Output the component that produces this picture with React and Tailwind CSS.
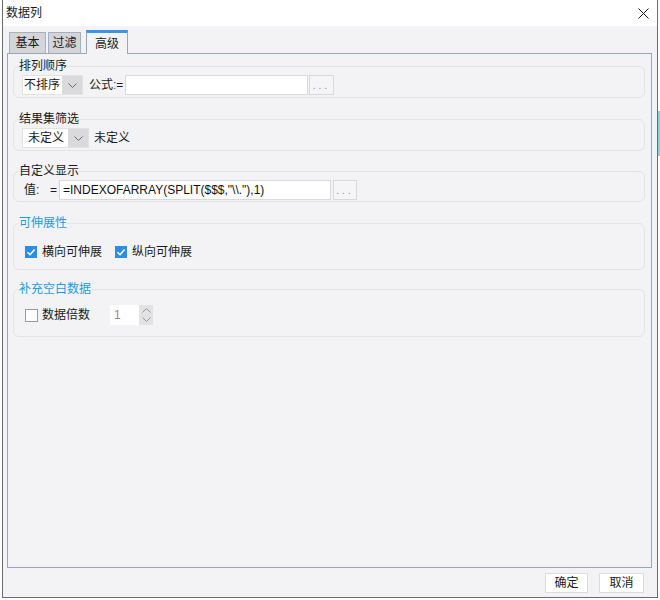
import React from 'react';

const font = "font-['Liberation_Sans','Noto_Sans_CJK_SC',sans-serif]";

const Group = ({ title, blue, className = '', children }) => (
  <fieldset className={`border border-[#e3e3e6] rounded-[6px] px-[5px] ${className}`}>
    <legend className={`p-0 text-[12px] leading-[16px] ${blue ? 'text-[#1c9be0]' : 'text-[#1a1a1a]'}`}>{title}</legend>
    <div className="pl-[3px]">{children}</div>
  </fieldset>
);

const Chevron = () => (
  <svg width="9" height="5" viewBox="0 0 9 5" fill="none">
    <path d="M0.5 0.5 L4.5 4.5 L8.5 0.5" stroke="#6b6b6b" strokeWidth="1" />
  </svg>
);

const Dots = ({ w }) => (
  <div className={`${w} h-[20px] border border-[#d9d9d9] bg-[#f5f5f7] flex items-end justify-center pb-[3px] text-[10px] leading-[10px] tracking-[3px] text-[#8a8a8a]`}>
    ...
  </div>
);

const Check = ({ checked }) =>
  checked ? (
    <span className="w-[12px] h-[12px] bg-[#2e8be6] flex items-center justify-center">
      <svg width="10" height="10" viewBox="0 0 10 10" fill="none">
        <path d="M1.5 5.2 L4 7.7 L8.6 2.4" stroke="#ffffff" strokeWidth="1.6" />
      </svg>
    </span>
  ) : (
    <span className="w-[13px] h-[13px] border border-[#9a9a9a] bg-white" />
  );

export default function App() {
  return (
    <div className={`w-[660px] h-[600px] bg-white flex overflow-hidden ${font} text-[12px] text-[#1a1a1a]`}>
      <div className="w-[2px] shrink-0" />

      {/* Dialog */}
      <div className="w-[656px] h-[598px] shrink-0 flex flex-col border-x border-b border-[#6b6b6b] bg-[#f3f3f5]">
        {/* Title bar */}
        <div className="h-[26px] shrink-0 bg-white flex items-center justify-between pl-[3px] pr-[8px]">
          <span className="text-[12px] leading-[16px]">数据列</span>
          <svg width="11" height="11" viewBox="0 0 11 11" fill="none">
            <path d="M0.5 0.5 L10.5 10.5 M10.5 0.5 L0.5 10.5" stroke="#1a1a1a" strokeWidth="1" />
          </svg>
        </div>

        <div className="flex-1 flex flex-col pt-[4px] pl-[4px] pr-[5px] pb-[4px]">
          {/* Tabs */}
          <div className="h-[23px] flex items-end pl-[2px]">
            <div className="w-[37px] h-[21px] border border-b-0 border-[#a3afc2] bg-[#d5d5d8] flex items-center justify-center">基本</div>
            <div className="w-[33px] h-[21px] ml-[2px] border border-b-0 border-[#a3afc2] bg-[#d5d5d8] flex items-center justify-center">过滤</div>
            <div className="w-[42px] h-[24px] ml-[5px] -mb-px relative z-10 border-x border-[#97a7c1] border-t-[3px] border-t-[#3d94e6] bg-[#f3f3f5] flex items-center justify-center">高级</div>
          </div>

          {/* Panel */}
          <div className="flex-1 border border-[#97a7c1] pt-[4px] pl-[5px] pr-[6px]">
            <Group title="排列顺序" className="pb-[2px]">
              <div className="flex items-center h-[20px] mt-[1px]">
                <div className="flex h-[20px] border border-[#e2e2e2]">
                  <div className="w-[39px] bg-white flex items-center pl-[1px]">不排序</div>
                  <div className="w-[20px] bg-[#dadadc] flex items-center justify-center"><Chevron /></div>
                </div>
                <span className="w-[36px] ml-[6px]">公式<span className="text-[#7a3a8a]">:</span>=</span>
                <div className="w-[183px] h-[20px] bg-white border border-[#d9d9d9]" />
                <div className="ml-[1px]"><Dots w="w-[25px]" /></div>
              </div>
            </Group>

            <Group title="结果集筛选" className="mt-[13px] pb-[2px]">
              <div className="flex items-center h-[20px] mt-[1px]">
                <div className="flex h-[20px] border border-[#e2e2e2]">
                  <div className="w-[45px] bg-white flex items-center pl-[5px]">未定义</div>
                  <div className="w-[20px] bg-[#dadadc] flex items-center justify-center"><Chevron /></div>
                </div>
                <span className="ml-[5px]">未定义</span>
              </div>
            </Group>

            <Group title="自定义显示" className="mt-[12px] pb-[1px]">
              <div className="flex items-center h-[20px] mt-[1px]">
                <span className="ml-[2px] w-[26px]">值:</span>
                <span className="w-[9px]">=</span>
                <div className="w-[272px] h-[20px] bg-white border border-[#d9d9d9] flex items-center pl-[3px] text-[12px] text-[#111]">
                  =INDEXOFARRAY(SPLIT($$$,"\\."),1)
                </div>
                <div className="ml-[2px]"><Dots w="w-[24px]" /></div>
              </div>
            </Group>

            <Group title="可伸展性" blue className="mt-[13px] pb-[7px]">
              <div className="flex items-center h-[20px] mt-[11px] pl-[3px]">
                <Check checked />
                <span className="ml-[5px]">横向可伸展</span>
                <span className="ml-[13px]"><Check checked /></span>
                <span className="ml-[5px]">纵向可伸展</span>
              </div>
            </Group>

            <Group title="补充空白数据" blue className="mt-[11px] pb-[11px]">
              <div className="flex items-center h-[20px] mt-[8px] pl-[3px]">
                <Check />
                <span className="ml-[4px]">数据倍数</span>
                <div className="ml-[20px] flex h-[20px]">
                  <div className="w-[29px] bg-white flex items-center pl-[4px] text-[#8a8a8a]">1</div>
                  <div className="w-[14px] bg-[#e2e2e4] flex flex-col items-center justify-center gap-[4px]">
                    <svg width="9" height="5" viewBox="0 0 9 5" fill="none"><path d="M0.5 4.5 L4.5 0.5 L8.5 4.5" stroke="#9a9a9a" strokeWidth="1" /></svg>
                    <svg width="9" height="5" viewBox="0 0 9 5" fill="none"><path d="M0.5 0.5 L4.5 4.5 L8.5 0.5" stroke="#9a9a9a" strokeWidth="1" /></svg>
                  </div>
                </div>
              </div>
            </Group>
          </div>

          {/* Buttons */}
          <div className="h-[20px] mt-[5px] flex justify-end gap-[11px] pr-[8px]">
            <button className="w-[43px] h-[20px] bg-white border border-[#dcdcdc] flex items-center justify-center">确定</button>
            <button className="w-[45px] h-[20px] bg-white border border-[#dcdcdc] flex items-center justify-center">取消</button>
          </div>
        </div>
      </div>

      <div className="w-[2px] shrink-0 flex flex-col">
        <div className="h-[111px]" />
        <div className="h-[45px] bg-[#8fcfee]" />
      </div>
    </div>
  );
}
